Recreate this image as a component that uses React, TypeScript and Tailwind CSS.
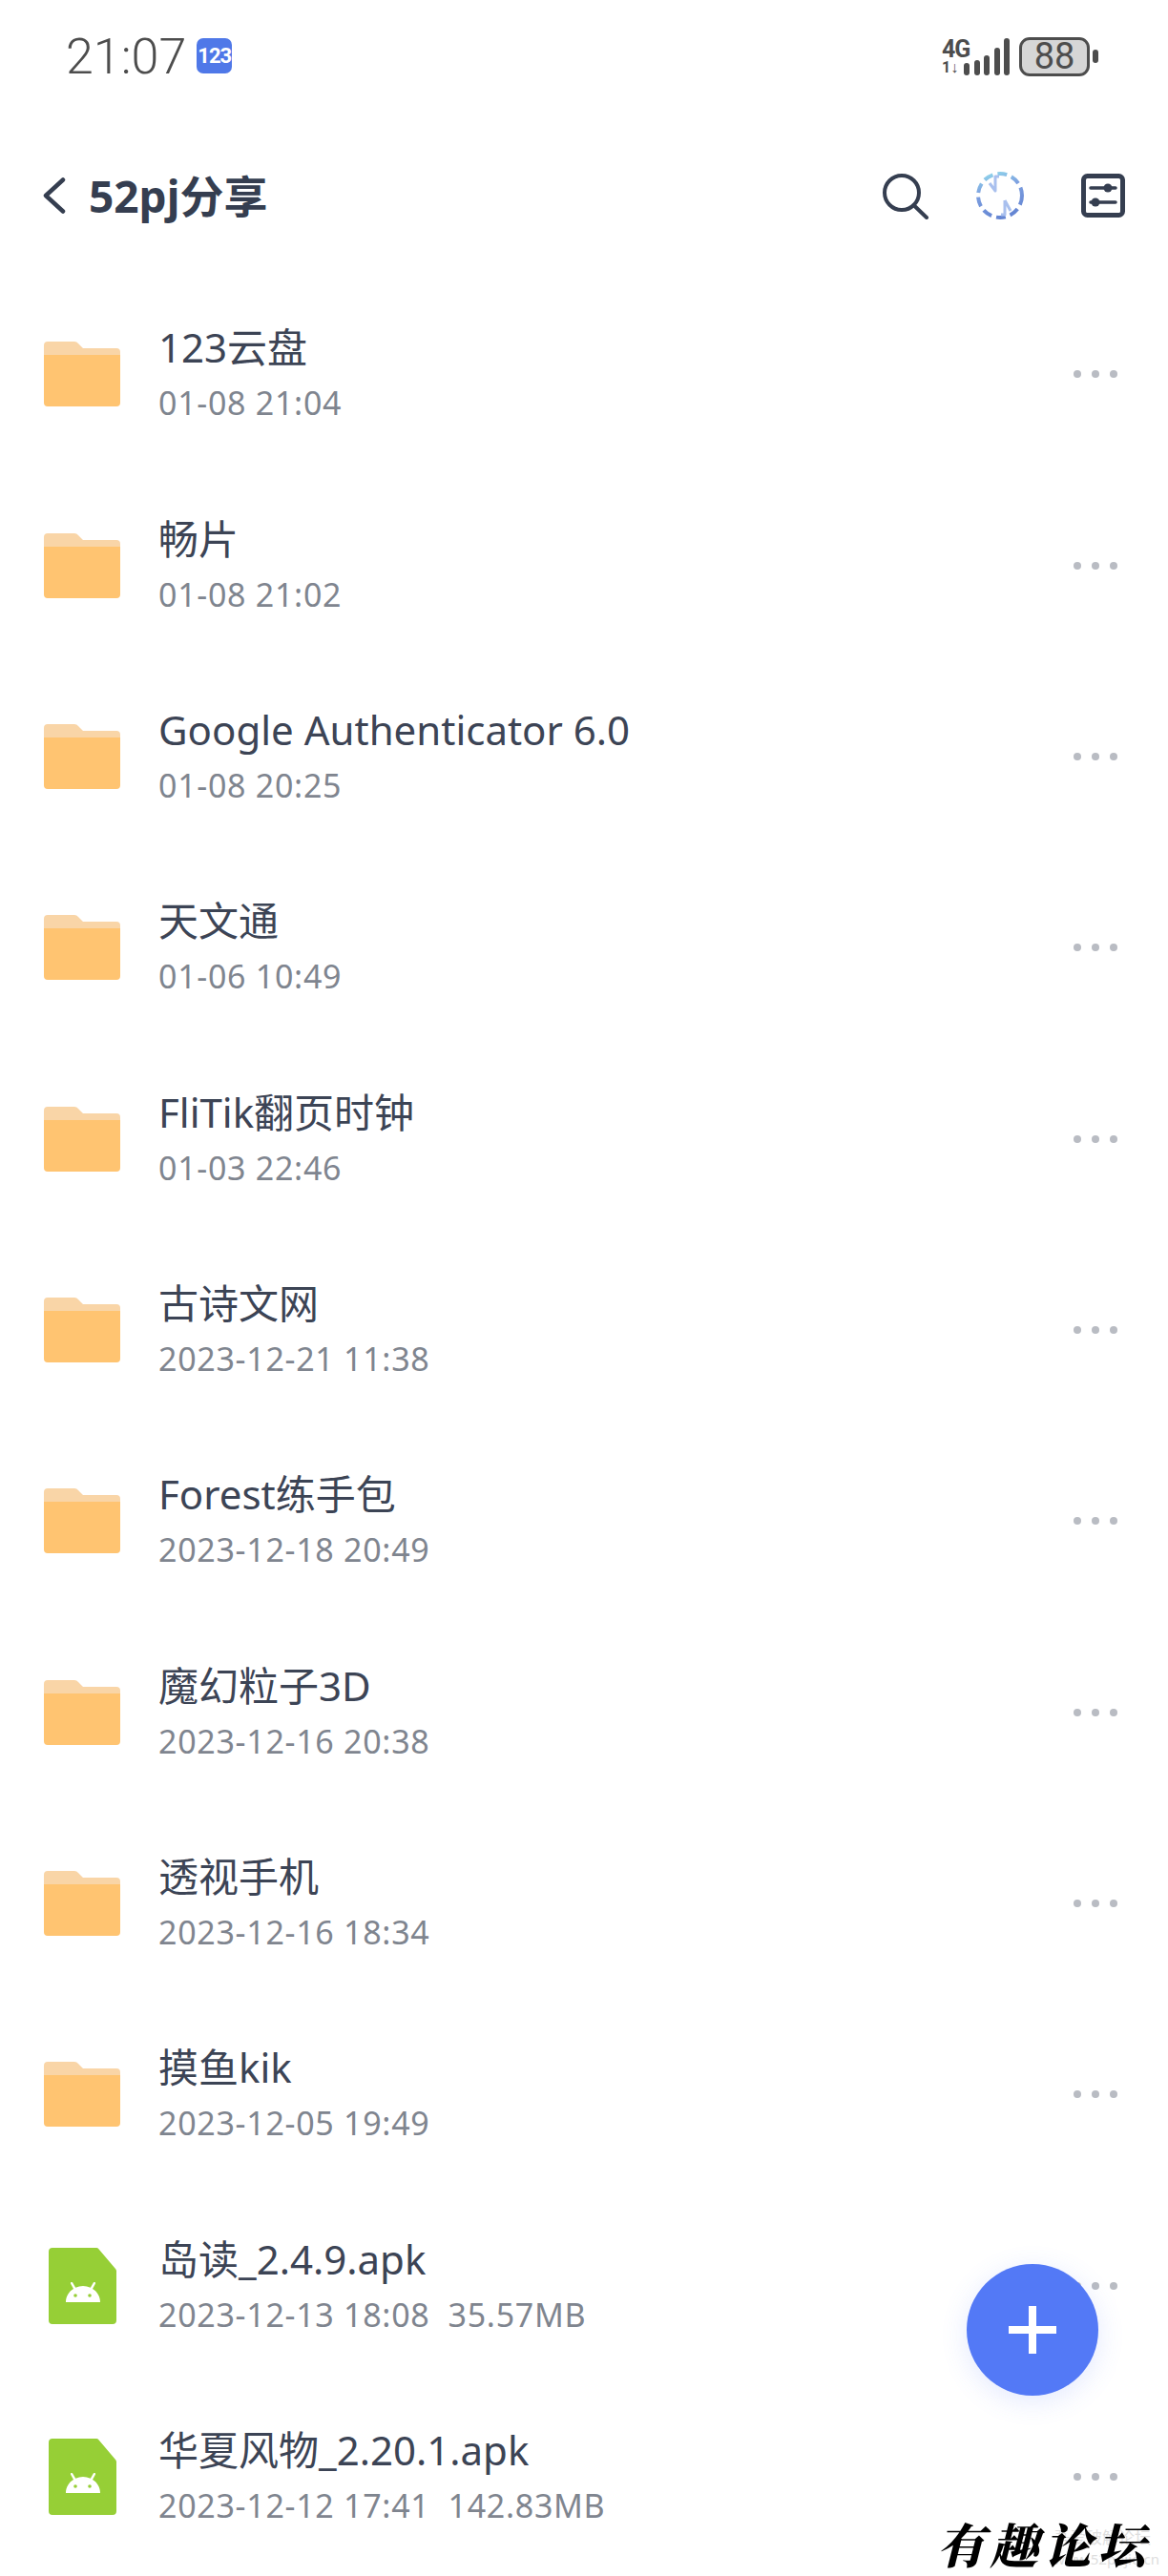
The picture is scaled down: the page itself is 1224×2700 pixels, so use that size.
import React from "react";

const items = [
  { t: "123云盘", d: "01-08 21:04" },
  { t: "畅片", d: "01-08 21:02" },
  { t: "Google Authenticator 6.0", d: "01-08 20:25" },
  { t: "天文通", d: "01-06 10:49" },
  { t: "FliTik翻页时钟", d: "01-03 22:46" },
  { t: "古诗文网", d: "2023-12-21 11:38" },
  { t: "Forest练手包", d: "2023-12-18 20:49" },
  { t: "魔幻粒子3D", d: "2023-12-16 20:38" },
  { t: "透视手机", d: "2023-12-16 18:34" },
  { t: "摸鱼kik", d: "2023-12-05 19:49" },
  { t: "岛读_2.4.9.apk", d: "2023-12-13 18:08", s: "35.57MB", apk: true },
  { t: "华夏风物_2.20.1.apk", d: "2023-12-12 17:41", s: "142.83MB", apk: true },
];

function Folder() {
  return (
    <svg width="80" height="68" viewBox="0 0 80 68" className="ml-[46px]">
      <path d="M0 4a4 4 0 0 1 4-4h28a5 5 0 0 1 4 2l5 5h35a4 4 0 0 1 4 4v10H0z" fill="#f9d5a7" />
      <path d="M0 14h80v50a4 4 0 0 1-4 4H4a4 4 0 0 1-4-4z" fill="#ffc471" />
    </svg>
  );
}

function Apk() {
  return (
    <svg width="71" height="80" viewBox="0 0 71 80" className="ml-[51px]">
      <path d="M4 0h46a3 3 0 0 1 2.400 1.200L70 22a4 4 0 0 1 1 3v51a4 4 0 0 1-4 4H4a4 4 0 0 1-4-4V4a4 4 0 0 1 4-4z" fill="#96cf36" />
      <path d="M18 57c0-6 3-11 8-14l-3-5.500a1.200 1.200 0 0 1 2-1.200l3.200 5.400a20 20 0 0 1 15.600 0l3.200-5.400a1.200 1.200 0 0 1 2 1.200l-3 5.500c5 3 8 8 8 14z" fill="#fff" />
      <circle cx="28" cy="50" r="1.800" fill="#96cf36" />
      <circle cx="43" cy="50" r="1.800" fill="#96cf36" />
    </svg>
  );
}

function Dots() {
  return (
    <div className="flex items-center gap-[11px]">
      <span className="w-2 h-2 rounded-full bg-[#b9bcc3]" />
      <span className="w-2 h-2 rounded-full bg-[#b9bcc3]" />
      <span className="w-2 h-2 rounded-full bg-[#b9bcc3]" />
    </div>
  );
}

function Row({ t, d, s, apk }: { t: string; d: string; s?: string; apk?: boolean }) {
  return (
    <div className="h-[200.36px] flex items-center">
      <div className="w-[166px] shrink-0">{apk ? <Apk /> : <Folder />}</div>
      <div className="flex-1 flex flex-col pt-[2px]">
        <div className="text-[42px] leading-[56px] mb-[2px] text-[#3c4455] [font-family:'Noto_Sans','Noto_Sans_CJK_SC',sans-serif]">{t}</div>
        <div className="text-[34px] leading-[56px] text-[#7f858f] tracking-[0.7px] whitespace-pre [font-family:'Noto_Sans','Noto_Sans_CJK_SC',sans-serif]">
          {d}
          {s ? "  " + s : ""}
        </div>
      </div>
      <div className="pr-[53px]">
        <Dots />
      </div>
    </div>
  );
}

function StatusBar() {
  return (
    <div className="h-[116px] pt-[4px] flex items-center justify-between pl-[69px] pr-[73px] text-[#4d4d4d]">
      <div className="flex items-center gap-[11px]">
        <span className="text-[52px] leading-none font-light [font-family:Roboto,sans-serif]">21:07</span>
        <span className="w-[37px] h-[37px] -mt-[3px] rounded-[7px] bg-[#4f78e8] text-white text-[22px] font-bold leading-none flex items-center justify-center tracking-[-1px] [font-family:Roboto,sans-serif]">
          123
        </span>
      </div>
      <div className="flex items-center -mt-[2px]">
        <div className="w-[27px] flex flex-col [font-family:Roboto,sans-serif] font-bold">
          <span className="text-[25px] leading-[24px] tracking-[-1px]">4G</span>
          <span className="text-[16px] leading-[14px]">1↓</span>
        </div>
        <svg width="50" height="40" viewBox="0 0 50 40" className="mr-[9px] -ml-[5px]" fill="#4d4d4d">
          <rect x="1" y="27" width="6" height="13" rx="3" />
          <rect x="12" y="24" width="6" height="16" rx="3" />
          <rect x="22" y="19" width="6" height="21" rx="3" />
          <rect x="33" y="11" width="6" height="29" rx="3" />
          <rect x="43" y="1" width="6" height="39" rx="3" />
        </svg>
        <div className="w-[74px] h-[41px] rounded-[11px] border-[3px] border-[#4d4d4d] bg-[#d6d6d6] flex items-center justify-center text-[38px] leading-none [font-family:Roboto,sans-serif]">
          88
        </div>
        <div className="w-[6px] h-[14px] rounded-full bg-[#4d4d4d] ml-[3px]" />
      </div>
    </div>
  );
}

function Header() {
  return (
    <div className="h-[176px] pt-[2px] flex items-center text-[#353e50]">
      <svg width="24" height="38" viewBox="0 0 24 38" className="ml-[45px]" fill="none" stroke="#353e50" strokeWidth="4.500" strokeLinecap="round" strokeLinejoin="round">
        <path d="M21 2.500 3 19l18 16.500" />
      </svg>
      <span className="ml-[24px] text-[46px] leading-none font-bold [font-family:'Noto_Sans','Noto_Sans_CJK_SC',sans-serif]">52pj分享</span>
      <div className="flex-1" />
      <svg width="50" height="50" viewBox="0 0 50 50" fill="none" stroke="#353e50" strokeWidth="4" strokeLinecap="round" className="mr-[48px]">
        <circle cx="21" cy="22" r="18" />
        <path d="M33.500 35 47 48" />
      </svg>
      <svg width="52" height="52" viewBox="0 0 52 52" fill="none" className="mr-[59px]">
        <defs>
          <linearGradient id="sg" x1="0.300" y1="0" x2="0.600" y2="1">
            <stop offset="0" stopColor="#8ed0ea" />
            <stop offset="0.350" stopColor="#7ea0e0" />
            <stop offset="1" stopColor="#6384d2" />
          </linearGradient>
        </defs>
        <circle cx="26" cy="26" r="23" stroke="url(#sg)" strokeWidth="4" strokeDasharray="10 5" />
        <path d="M25 6h-4v15l-6-8" stroke="#a9c0ee" strokeWidth="3" strokeLinejoin="round" />
        <path d="M31 31v15h-4M31 31l6 11" stroke="#a9c0ee" strokeWidth="3" strokeLinejoin="round" />
      </svg>
      <svg width="46" height="46" viewBox="0 0 46 46" fill="none" stroke="#353e50" className="mr-[45px]">
        <rect x="2.500" y="2.500" width="41" height="41" rx="4" strokeWidth="5" />
        <path d="M10 15h26M10 30h26" strokeWidth="3.500" strokeLinecap="round" />
        <circle cx="28" cy="15" r="4.500" fill="#353e50" stroke="none" />
        <circle cx="15" cy="30" r="4.500" fill="#353e50" stroke="none" />
      </svg>
    </div>
  );
}

export default function App() {
  return (
    <div className="relative w-[1224px] h-[2700px] overflow-hidden bg-white">
      <StatusBar />
      <Header />
      <div className="flex flex-col">
        {items.map((it) => (
          <Row key={it.t} {...it} />
        ))}
      </div>

      <div className="absolute left-[1013px] top-[2373px] w-[138px] h-[138px] rounded-full bg-[#5379f6] shadow-[0_6px_28px_rgba(83,121,246,0.16)] flex items-center justify-center">
        <svg width="50" height="50" viewBox="0 0 50 50" fill="#fff">
          <rect x="21" y="0" width="8" height="50" />
          <rect x="0" y="21" width="50" height="8" />
        </svg>
      </div>

      <div className="absolute left-[1104px] top-[2648px] text-[#c9c9c9] opacity-60 [font-family:'Noto_Sans','Noto_Sans_CJK_SC',sans-serif]">
        <div className="text-[17px] leading-[24px] whitespace-nowrap">吾爱破解论坛</div>
        <div className="text-[15px] leading-[20px] whitespace-nowrap">www.52pojie.cn</div>
      </div>
      <div className="absolute left-[982px] top-[2636px] text-[50px] leading-[58px] tracking-[6px] font-black italic text-black whitespace-nowrap [font-family:'Noto_Serif_CJK_SC','Noto_Sans_CJK_SC',serif]">
        有趣论坛
      </div>
    </div>
  );
}
